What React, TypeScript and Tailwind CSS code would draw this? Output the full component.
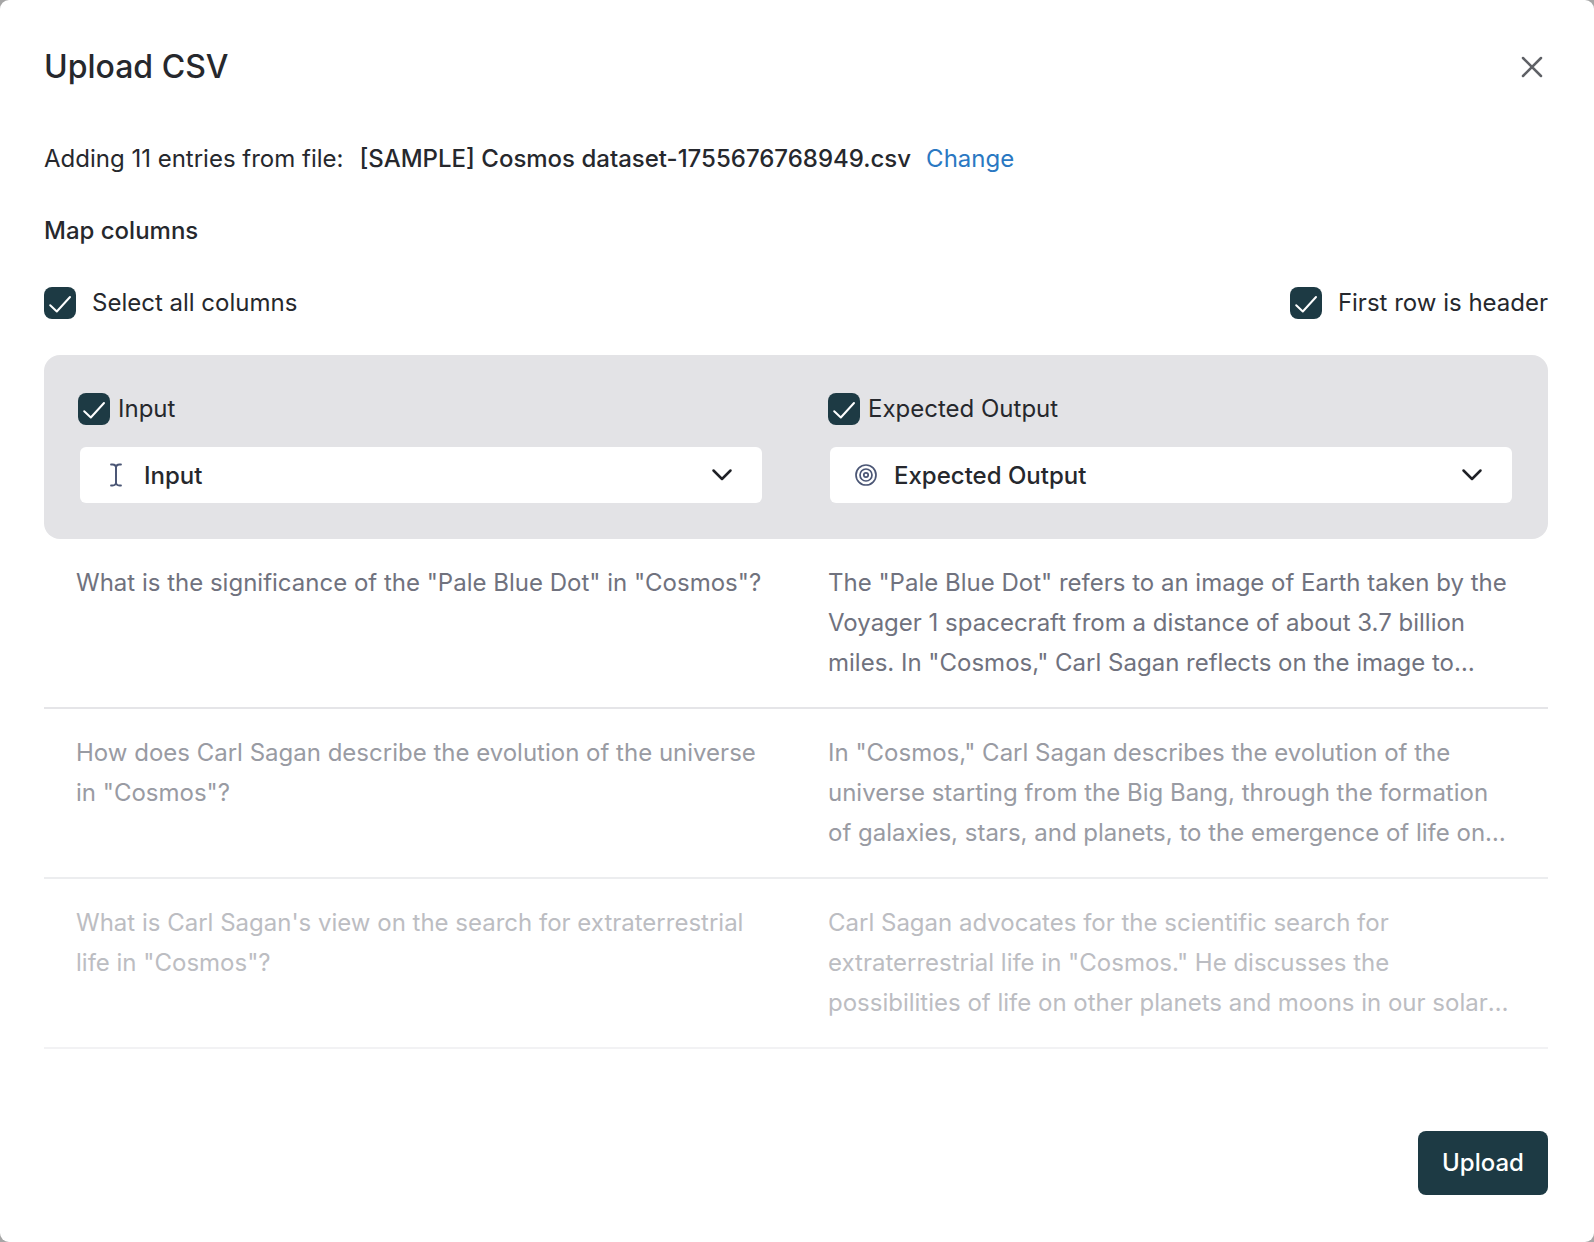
import React from "react";

function Check({ className = "" }: { className?: string }) {
  return (
    <span className={"flex h-8 w-8 shrink-0 items-center justify-center rounded-lg bg-[#1d3a44] " + className}>
      <svg width="32" height="32" viewBox="0 0 32 32" fill="none" stroke="#fff" strokeWidth="2" strokeLinecap="round" strokeLinejoin="round">
        <path d="M6.200 18.200 12.800 24.500 26 10" />
      </svg>
    </span>
  );
}

function Chevron() {
  return (
    <svg width="24" height="24" viewBox="0 0 24 24" fill="none" stroke="#1f2126" strokeWidth="2.500" strokeLinecap="round" strokeLinejoin="round">
      <path d="M3.500 7.500 12 16 20.500 7.500" />
    </svg>
  );
}

function CursorIcon() {
  return (
    <svg width="24" height="24" viewBox="0 0 24 24" fill="none" stroke="#4b5675" strokeWidth="1.8" strokeLinecap="round" strokeLinejoin="round">
      <path d="M7 1.500h1.500C10.500 1.500 12 3 12 5v14c0 2-1.500 3.500-3.500 3.500H7" />
      <path d="M17 1.500h-1.500C13.500 1.500 12 3 12 5v14c0 2 1.500 3.500 3.500 3.500H17" />
    </svg>
  );
}

function TargetIcon() {
  return (
    <svg width="24" height="24" viewBox="0 0 24 24" fill="none" stroke="#4b5675" strokeWidth="1.7">
      <circle cx="12" cy="12" r="10" />
      <circle cx="12" cy="12" r="6" />
      <circle cx="12" cy="12" r="2.200" />
    </svg>
  );
}

const rows = [
  {
    o: "text-[#70727e] border-[#e5e5e8]",
    a: 'What is the significance of the "Pale Blue Dot" in "Cosmos"?',
    b: 'The "Pale Blue Dot" refers to an image of Earth taken by the Voyager 1 spacecraft from a distance of about 3.7 billion miles. In "Cosmos," Carl Sagan reflects on the image to illustrate the fragility of our planet.',
  },
  {
    o: "text-[#999ba3] border-[#ecedef]",
    a: 'How does Carl Sagan describe the evolution of the universe in "Cosmos"?',
    b: 'In "Cosmos," Carl Sagan describes the evolution of the universe starting from the Big Bang, through the formation of galaxies, stars, and planets, to the emergence of life on Earth and the development of human civilization.',
  },
  {
    o: "text-[#bcbdc2] border-[#f2f2f4]",
    a: 'What is Carl Sagan\'s view on the search for extraterrestrial life in "Cosmos"?',
    b: 'Carl Sagan advocates for the scientific search for extraterrestrial life in "Cosmos." He discusses the possibilities of life on other planets and moons in our solar system and across the galaxy as a whole.',
  },
];

export default function App() {
  return (
    <div className="h-[1242px] w-[1594px] overflow-hidden bg-[#a6a6a6] font-['Inter',sans-serif] text-[24px] leading-[40px] text-[#26282d]">
      <div className="flex h-full flex-col rounded-[9px] bg-white pb-[47px] pl-[44px] pr-[46px] pt-[45px]">
        <div className="flex h-[44px] items-center justify-between">
          <h1 className="text-[32px] font-medium leading-[44px]">Upload CSV</h1>
          <svg className="mr-[4px]" width="24" height="24" viewBox="0 0 24 24" fill="none" stroke="#5f6166" strokeWidth="2.500" strokeLinecap="round">
            <path d="M3 3 21 21M21 3 3 21" />
          </svg>
        </div>

        <div className="mt-[50px] flex h-[40px] items-center">
          <span>Adding 11 entries from file:</span>
          <span className="ml-4 font-medium">[SAMPLE] Cosmos dataset-1755676768949.csv</span>
          <span className="ml-[15px] text-[#2a78c2]">Change</span>
        </div>

        <div className="mt-[32px] h-[40px] font-medium">Map columns</div>

        <div className="mt-[32px] flex h-[40px] items-center justify-between">
          <label className="flex items-center gap-4">
            <Check />
            <span>Select all columns</span>
          </label>
          <label className="flex items-center gap-4">
            <Check />
            <span>First row is header</span>
          </label>
        </div>

        <div className="mt-[32px] grid h-[184px] grid-cols-2 gap-x-[68px] rounded-2xl bg-[#e3e3e6] px-[36px] pt-[34px]">
          <div>
            <div className="-ml-[2px] flex h-[40px] items-center gap-2">
              <Check />
              <span>Input</span>
            </div>
            <div className="mt-[18px] flex h-[56px] items-center justify-between rounded-md bg-white pl-6 pr-[16px] font-medium">
              <div className="flex items-center gap-4">
                <CursorIcon />
                <span className="pt-[1px]">Input</span>
              </div>
              <span className="mr-[12px]"><Chevron /></span>
            </div>
          </div>
          <div>
            <div className="-ml-[2px] flex h-[40px] items-center gap-2">
              <Check />
              <span>Expected Output</span>
            </div>
            <div className="mt-[18px] flex h-[56px] items-center justify-between rounded-md bg-white pl-6 pr-[16px] font-medium">
              <div className="flex items-center gap-4">
                <TargetIcon />
                <span className="pt-[1px]">Expected Output</span>
              </div>
              <span className="mr-[12px]"><Chevron /></span>
            </div>
          </div>
        </div>

        {rows.map((r) => (
          <div key={r.a} className={"grid h-[170px] shrink-0 grid-cols-[692px_684px] gap-x-[60px] border-b-2 py-[24px] pl-[32px] pr-[36px] " + r.o}>
            <div className="line-clamp-3">{r.a}</div>
            <div className="line-clamp-3">{r.b}</div>
          </div>
        ))}

        <div className="mt-auto flex justify-end">
          <button className="h-[64px] w-[130px] rounded-lg bg-[#1d3a44] font-medium text-white">Upload</button>
        </div>
      </div>
    </div>
  );
}
